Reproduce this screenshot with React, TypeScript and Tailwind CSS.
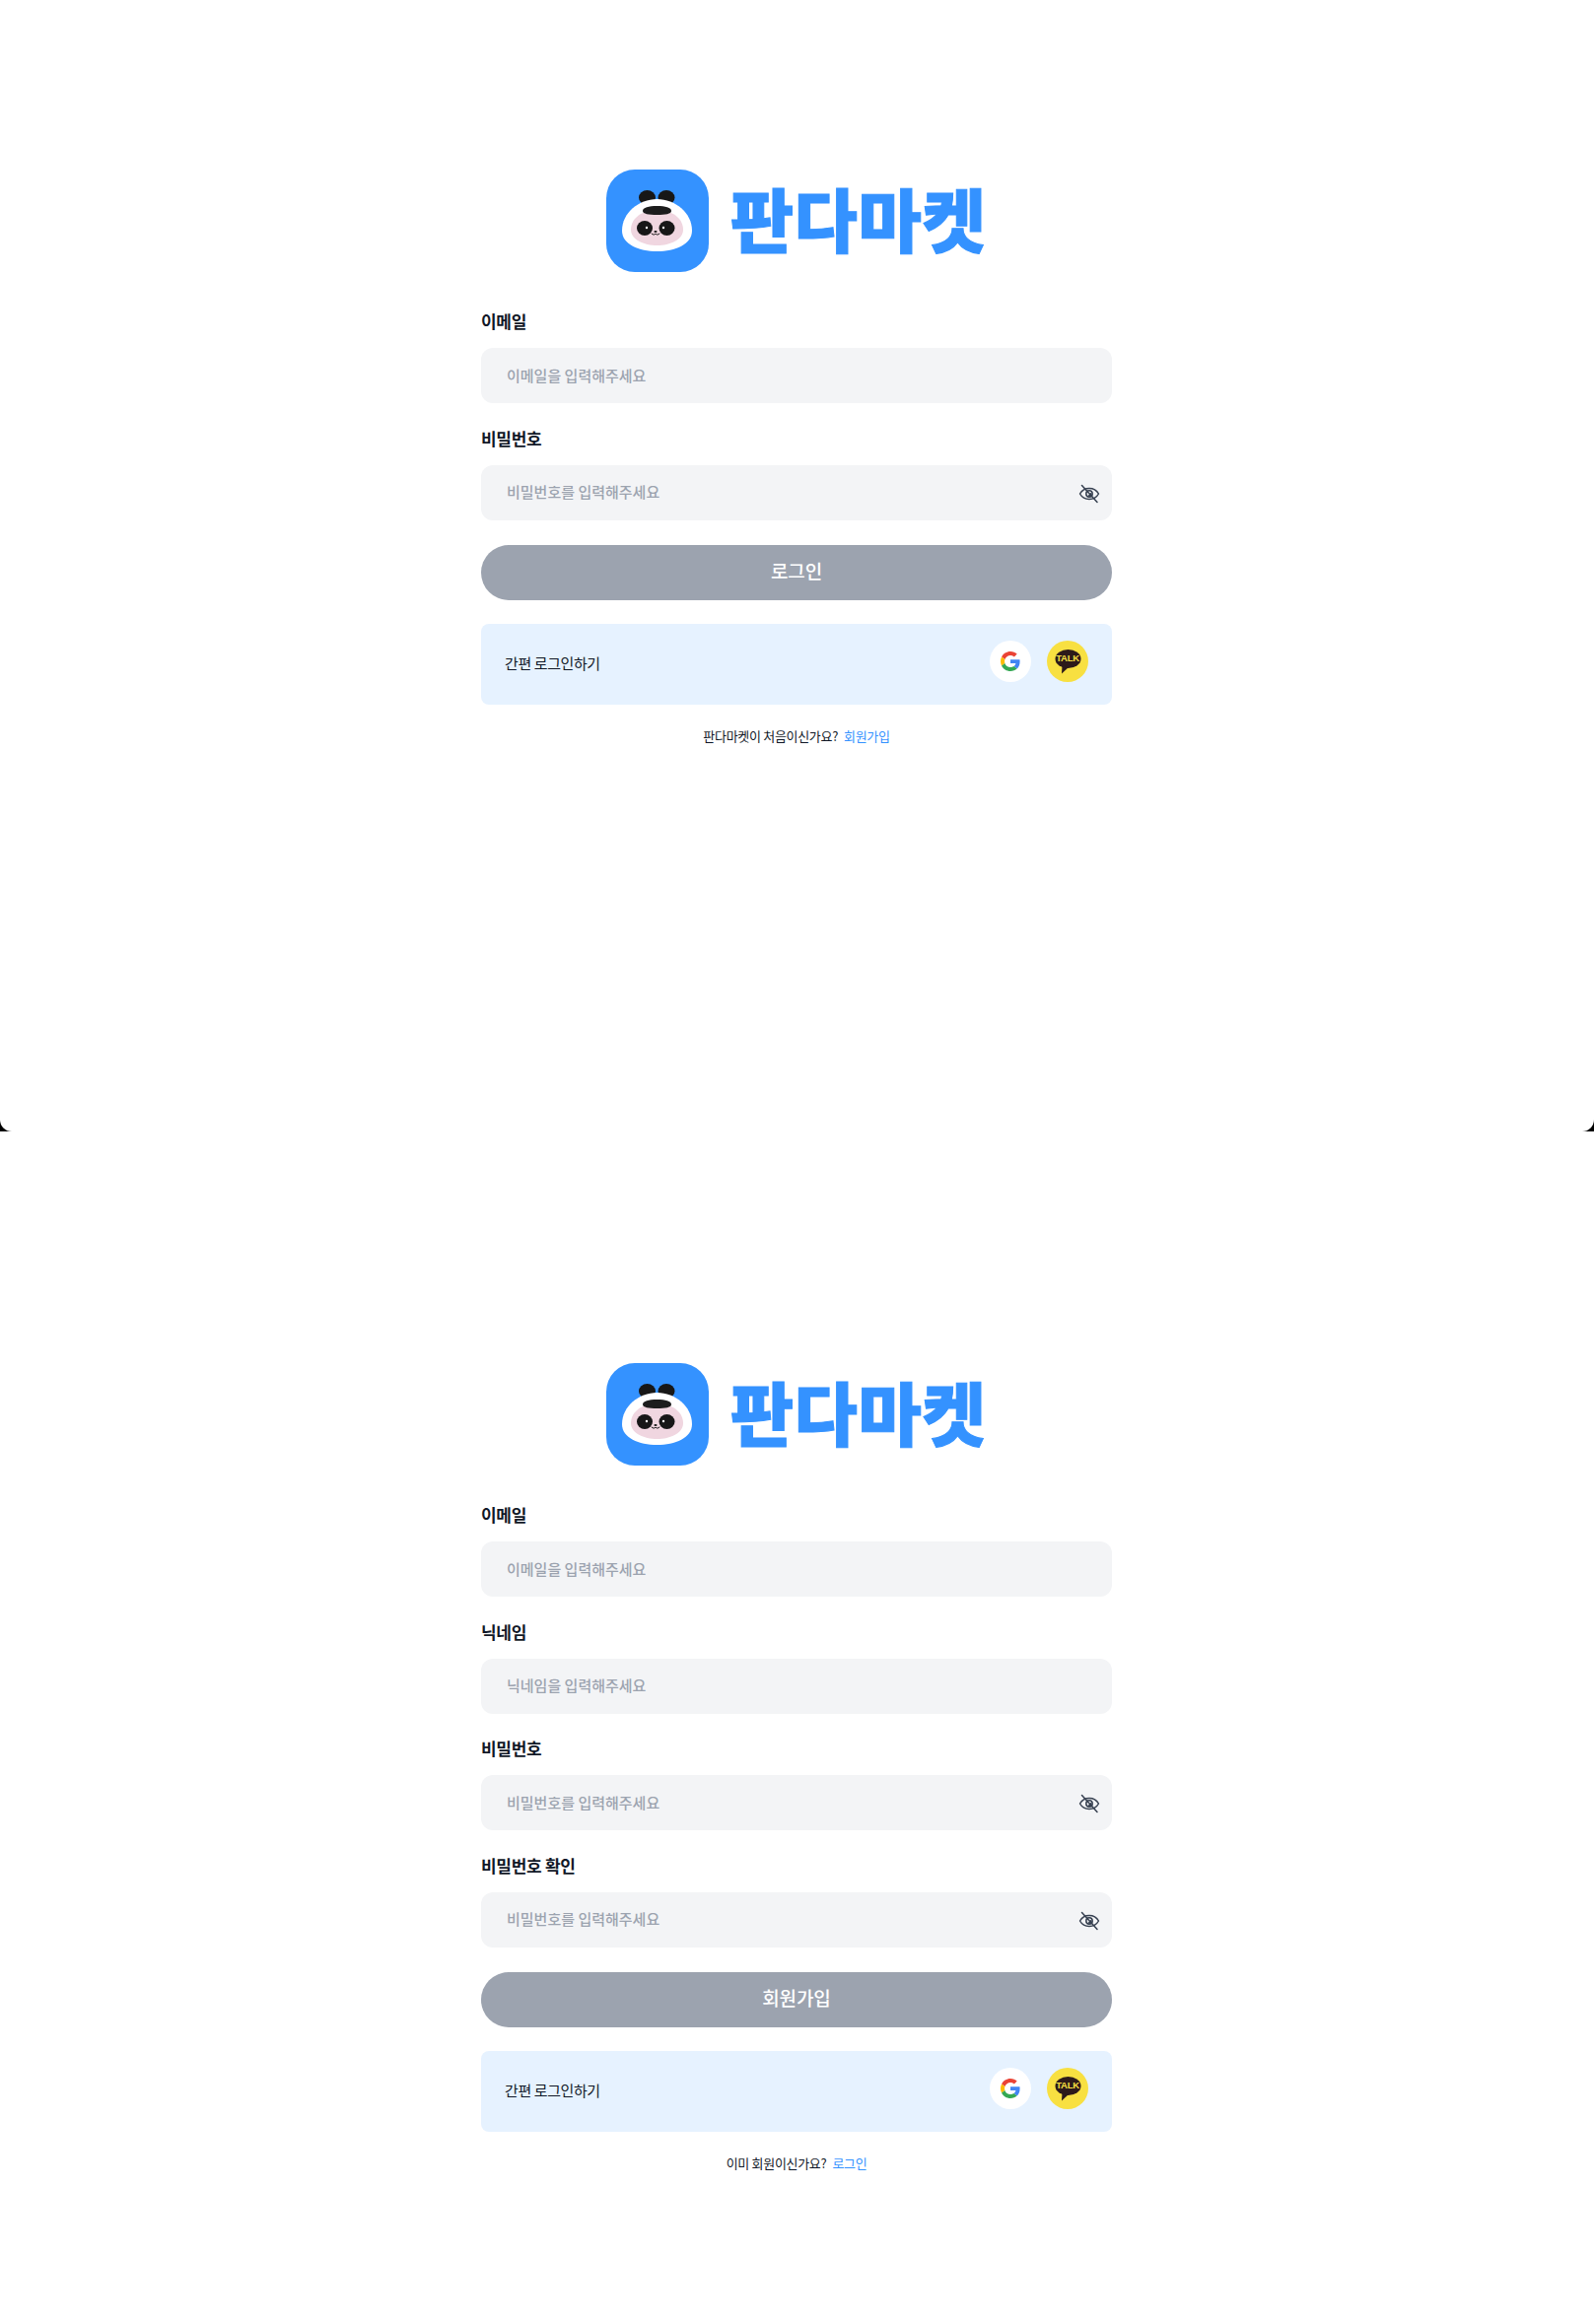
const kr = "font-['Noto_Sans_CJK_KR','Noto_Sans',sans-serif]";

function PandaLogo() {
  return (
    <svg width="104" height="104" viewBox="0 0 104 104" className="shrink-0">
      <rect width="104" height="104" rx="29" fill="#3492ff" />
      <ellipse cx="41.5" cy="28.500" rx="8.500" ry="7.500" fill="#171717" />
      <ellipse cx="61" cy="28.500" rx="8.500" ry="7.500" fill="#171717" />
      <path d="M16 62C16 44 33 30 51.500 30C70 30 87 44 87 62C87 76 70 83 51.500 83C33 83 16 76 16 62Z" fill="#fff" />
      <path d="M25 61C25 49 37 41 51.500 41C66 41 78 49 78 61C78 71 65 77 51.500 77C38 77 25 71 25 61Z" fill="#f0d6e0" />
      <path d="M37 42C37 38.500 43 37 51.500 37C60 37 66 38.500 66 42C66 45 60 46 51.500 46C43 46 37 45 37 42Z" fill="#1c1c1c" />
      <ellipse cx="39" cy="59.500" rx="8" ry="7.500" fill="#171717" />
      <ellipse cx="61.500" cy="59.500" rx="8" ry="7.500" fill="#171717" />
      <circle cx="41" cy="59" r="1.200" fill="#fff" />
      <circle cx="58" cy="59" r="1.200" fill="#fff" />
      <ellipse cx="50" cy="63" rx="1.600" ry="1" fill="#171717" />
      <path d="M46 65C47.500 66.500 49 66.500 50 65C51 66.500 52.500 66.500 54 65" fill="none" stroke="#171717" strokeWidth="1" strokeLinecap="round" />
    </svg>
  );
}

function EyeOffIcon() {
  return (
    <svg width="22" height="22" viewBox="0 0 22 22" fill="none" stroke="#374151" strokeWidth="1.5" strokeLinecap="round" strokeLinejoin="round">
      <path d="M1.500 11C3.500 7.500 6.800 5.500 11 5.500C15.200 5.500 18.500 7.500 20.500 11C18.500 14.500 15.200 16.500 11 16.500C6.800 16.500 3.500 14.500 1.500 11Z" />
      <circle cx="11" cy="11" r="3.200" />
      <path d="M9 13.500L13 9.500L13.800 12.500L12 14Z" fill="#374151" stroke="none" />
      <path d="M3.500 2.500L19 19.500" />
    </svg>
  );
}

function GoogleIcon() {
  return (
    <svg width="20" height="20" viewBox="0 0 48 48">
      <path fill="#EA4335" d="M24 9.5c3.54 0 6.71 1.22 9.21 3.6l6.85-6.85C35.9 2.38 30.47 0 24 0 14.62 0 6.51 5.38 2.56 13.22l7.98 6.19C12.43 13.72 17.74 9.5 24 9.5z" />
      <path fill="#4285F4" d="M46.98 24.55c0-1.57-.15-3.09-.38-4.55H24v9.02h12.94c-.58 2.96-2.26 5.48-4.78 7.18l7.73 6c4.51-4.18 7.09-10.36 7.09-17.65z" />
      <path fill="#FBBC05" d="M10.53 28.59c-.48-1.45-.76-2.99-.76-4.59s.27-3.14.76-4.59l-7.98-6.19C.92 16.46 0 20.12 0 24c0 3.88.92 7.54 2.56 10.78l7.97-6.19z" />
      <path fill="#34A853" d="M24 48c6.48 0 11.93-2.13 15.89-5.81l-7.73-6c-2.15 1.45-4.92 2.3-8.16 2.3-6.26 0-11.57-4.22-13.47-9.91l-7.98 6.19C6.51 42.62 14.62 48 24 48z" />
    </svg>
  );
}

function KakaoIcon() {
  return (
    <div className="relative flex h-[42px] w-[42px] items-center justify-center rounded-full bg-[#f8e041]">
      <svg width="27" height="25" viewBox="0 0 27 25">
        <ellipse cx="13.500" cy="9.500" rx="13" ry="9.500" fill="#2d1a1a" />
        <path d="M7.500 16L7 24.500L14 18Z" fill="#2d1a1a" />
      </svg>
      <span className="absolute top-[11px] left-0 w-full text-center font-['Liberation_Sans',sans-serif] text-[9.500px] leading-[13px] font-bold tracking-[-0.3px] text-[#f8e041]">
        TALK
      </span>
    </div>
  );
}

function Field({ label, placeholder, password }: { label: string; placeholder: string; password?: boolean }) {
  return (
    <div className="mt-[23.5px] first:mt-0">
      <label className="block text-[17px] leading-[24px] font-bold tracking-[-0.3px] text-[#111827]">{label}</label>
      <div className="relative mt-[15px]">
        <input
          readOnly
          placeholder={placeholder}
          className={`h-[56px] w-full rounded-xl bg-[#f3f4f6] pr-12 pb-[2px] pl-[26px] text-[15px] font-medium placeholder:text-[#9ca3af] ${kr}`}
        />
        {password && (
          <span className="absolute top-[18px] right-3">
            <EyeOffIcon />
          </span>
        )}
      </div>
    </div>
  );
}

function AuthForm({
  fields,
  submit,
  question,
  link,
}: {
  fields: { label: string; placeholder: string; password?: boolean }[];
  submit: string;
  question: string;
  link: string;
}) {
  return (
    <div className="mx-auto w-[640px]">
      <div className="flex items-center justify-center gap-[22px] pr-px">
        <PandaLogo />
        <span className="-mt-[6px] text-[70px] leading-[98px] font-black tracking-[0.5px] text-[#3492ff] [-webkit-text-stroke:1px_#3492ff]">
          판다마켓
        </span>
      </div>
      <div className="mt-[38px]">
        {fields.map(f => (
          <Field key={f.label} {...f} />
        ))}
      </div>
      <button className="mt-[25px] h-[56px] w-full rounded-full bg-[#9ca3af] pb-[2px] text-[19px] font-medium tracking-[-0.1px] text-white">
        {submit}
      </button>
      <div className="mt-[24px] flex h-[82px] items-center justify-between rounded-lg bg-[#e6f2ff] px-6">
        <span className="text-[15px] tracking-[-0.4px] text-[#111827]">간편 로그인하기</span>
        <div className="-mt-[5px] flex items-center gap-4">
          <div className="flex h-[42px] w-[42px] items-center justify-center rounded-full bg-white">
            <GoogleIcon />
          </div>
          <KakaoIcon />
        </div>
      </div>
      <p className="mt-[22px] text-center text-[13px] leading-[20px] tracking-[-0.3px] text-[#111827]">
        {question}
        <a className="ml-[6px] text-[#3492ff]">{link}</a>
      </p>
    </div>
  );
}

export default function App() {
  return (
    <div className={`bg-black ${kr}`}>
      <section className="h-[1148px] rounded-b-[12px] bg-white pt-[172px] pr-px">
        <AuthForm
          fields={[
            { label: "이메일", placeholder: "이메일을 입력해주세요" },
            { label: "비밀번호", placeholder: "비밀번호를 입력해주세요", password: true },
          ]}
          submit="로그인"
          question="판다마켓이 처음이신가요?"
          link="회원가입"
        />
      </section>
      <section className="h-[1210px] bg-white pt-[235px] pr-px">
        <AuthForm
          fields={[
            { label: "이메일", placeholder: "이메일을 입력해주세요" },
            { label: "닉네임", placeholder: "닉네임을 입력해주세요" },
            { label: "비밀번호", placeholder: "비밀번호를 입력해주세요", password: true },
            { label: "비밀번호 확인", placeholder: "비밀번호를 입력해주세요", password: true },
          ]}
          submit="회원가입"
          question="이미 회원이신가요?"
          link="로그인"
        />
      </section>
    </div>
  );
}
